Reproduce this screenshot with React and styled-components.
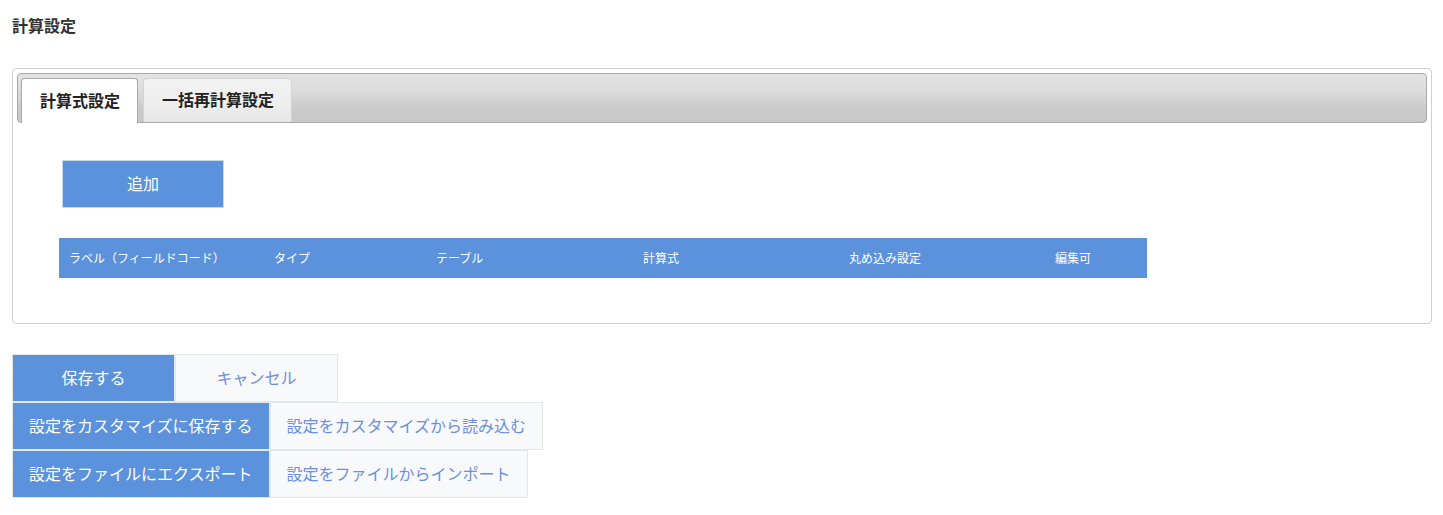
import React from "react";
import styled, { createGlobalStyle } from "styled-components";

const GlobalStyle = createGlobalStyle`
  html, body {
    margin: 0;
    padding: 0;
    background: #ffffff;
    font-family: "Noto Sans CJK JP", "Noto Sans", sans-serif;
    color: #333333;
  }
`;

const Page = styled.div`
  padding: 14px 11px 20px 12px;
`;

const Title = styled.h1`
  margin: 0;
  font-size: 16px;
  line-height: 22px;
  font-weight: 700;
  color: #333333;
`;

const Panel = styled.section`
  margin-top: 32px;
  border: 1px solid #d0d0d0;
  border-radius: 4px;
  padding: 4px;
  background: #ffffff;
`;

const TabBar = styled.div`
  display: flex;
  align-items: flex-start;
  gap: 5px;
  padding: 4px 3px 0;
  border: 1px solid #aaaaaa;
  border-radius: 4px;
  background: linear-gradient(to bottom, #e3e3e3 0%, #dcdcdc 35%, #cbcbcb 70%, #c8c8c8 100%);
`;

const Tab = styled.div`
  box-sizing: border-box;
  height: ${(p) => (p.$active ? "45px" : "44px")};
  margin-bottom: ${(p) => (p.$active ? "-1px" : "0")};
  padding: 0 17px 3px 18px;
  display: flex;
  align-items: center;
  border: 1px solid ${(p) => (p.$active ? "#aaaaaa" : "#d3d3d3")};
  border-bottom: none;
  border-radius: 4px 4px 0 0;
  background: ${(p) =>
    p.$active
      ? "#ffffff"
      : "linear-gradient(to bottom, #f2f2f2 0%, #efefef 50%, #e7e7e7 100%)"};
  font-size: 16px;
  font-weight: 700;
  color: #222222;
  white-space: nowrap;
`;

const TabBody = styled.div`
  padding: 37px 0 41px 42px;
`;

const AddButton = styled.button`
  box-sizing: border-box;
  display: block;
  margin-left: 3px;
  width: 162px;
  height: 48px;
  border: 1px solid #c9d8ee;
  background: #5b92db;
  color: #ffffff;
  font-family: inherit;
  font-size: 16px;
  padding: 0 0 2px;
  cursor: pointer;
`;

const TableHead = styled.div`
  margin-top: 30px;
  width: 1088px;
  height: 40px;
  display: grid;
  grid-template-columns: 205px 162px 207px 206px 206px 102px;
  align-items: center;
  background: #5b92db;
`;

const HeadCell = styled.div`
  padding: 0 0 1px 10px;
  font-size: 12px;
  color: #ffffff;
  white-space: nowrap;
`;

const ButtonStack = styled.div`
  margin-top: 30px;
  display: flex;
  flex-direction: column;
  align-items: flex-start;
`;

const ButtonRow = styled.div`
  display: flex;
`;

const ActionButton = styled.button`
  box-sizing: border-box;
  height: 48px;
  min-width: 163px;
  padding: 0 16px 3px;
  border: 1px solid #e3e7e8;
  background: ${(p) => (p.$primary ? "#5b92db" : "#f7f9fa")};
  color: ${(p) => (p.$primary ? "#ffffff" : "#6f8ede")};
  font-family: inherit;
  font-size: 16px;
  white-space: nowrap;
  cursor: pointer;
`;

const columns = [
  "ラベル（フィールドコード）",
  "タイプ",
  "テーブル",
  "計算式",
  "丸め込み設定",
  "編集可",
];

export default function App() {
  return (
    <>
      <GlobalStyle />
      <Page>
        <Title>計算設定</Title>
        <Panel>
          <TabBar>
            <Tab $active>計算式設定</Tab>
            <Tab>一括再計算設定</Tab>
          </TabBar>
          <TabBody>
            <AddButton>追加</AddButton>
            <TableHead>
              {columns.map((c) => (
                <HeadCell key={c}>{c}</HeadCell>
              ))}
            </TableHead>
          </TabBody>
        </Panel>
        <ButtonStack>
          <ButtonRow>
            <ActionButton $primary>保存する</ActionButton>
            <ActionButton>キャンセル</ActionButton>
          </ButtonRow>
          <ButtonRow>
            <ActionButton $primary>設定をカスタマイズに保存する</ActionButton>
            <ActionButton>設定をカスタマイズから読み込む</ActionButton>
          </ButtonRow>
          <ButtonRow>
            <ActionButton $primary>設定をファイルにエクスポート</ActionButton>
            <ActionButton>設定をファイルからインポート</ActionButton>
          </ButtonRow>
        </ButtonStack>
      </Page>
    </>
  );
}
